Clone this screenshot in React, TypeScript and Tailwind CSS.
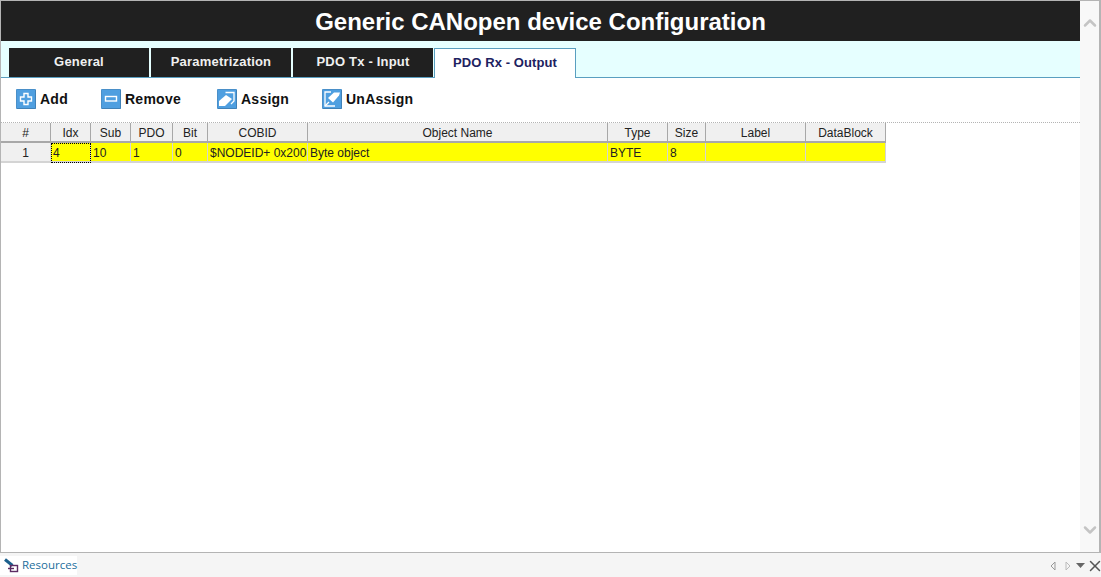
import React from 'react';
import { ChevronUp, ChevronDown, X } from 'lucide-react';

const tabs = ['General', 'Parametrization', 'PDO Tx - Input'];

function IconBox({ children }: { children: React.ReactNode }) {
  return (
    <svg width="20" height="20" viewBox="0 0 20 20" className="shrink-0">
      <rect x="0" y="0" width="20" height="20" rx="1" fill="#4f9fe0" />
      <rect x="0.5" y="0.5" width="19" height="19" rx="1" fill="none" stroke="#4a8fc8" />
      <path d="M1 19.500h18.500V1" fill="none" stroke="#3b78ab" strokeOpacity="0.6" />
      {children}
    </svg>
  );
}

const PlusIcon = () => (
  <IconBox>
    <path d="M8 4.500h4V8h3.500v4H12v3.500H8V12H4.500V8H8z" fill="none" stroke="#fff" strokeWidth="1.400" />
  </IconBox>
);

const MinusIcon = () => (
  <IconBox>
    <rect x="4.500" y="7.500" width="11" height="4.500" fill="none" stroke="#fff" strokeWidth="1.400" />
  </IconBox>
);

const AssignIcon = () => (
  <IconBox>
    <path d="M2 12l7-6 6 4-7 7H2z" fill="#fff" />
    <path d="M8.500 3.500h8.500V12l-3 3" fill="none" stroke="#fff" strokeWidth="1.300" />
  </IconBox>
);

const UnAssignIcon = () => (
  <IconBox>
    <path d="M6 9l6-5.500h6l-1 3-6 7z" fill="#fff" />
    <path d="M9 3H3v14h10" fill="none" stroke="#fff" strokeWidth="1.300" />
    <path d="M3 17l4-4" stroke="#fff" strokeWidth="1.300" />
  </IconBox>
);

function ToolButton({ icon, label, className }: { icon: React.ReactNode; label: string; className: string }) {
  return (
    <div className={`flex items-center gap-1 ${className}`}>
      {icon}
      <span className="text-[14px] font-bold text-[#111] tracking-[0.25px]">{label}</span>
    </div>
  );
}

const columns = [
  { title: '#', w: 'w-[50px]', value: '1', center: true },
  { title: 'Idx', w: 'w-[40px]', value: '4', focus: true },
  { title: 'Sub', w: 'w-[40px]', value: '10' },
  { title: 'PDO', w: 'w-[42px]', value: '1' },
  { title: 'Bit', w: 'w-[35px]', value: '0' },
  { title: 'COBID', w: 'w-[100px]', value: '$NODEID+ 0x200' },
  { title: 'Object Name', w: 'w-[300px]', value: 'Byte object' },
  { title: 'Type', w: 'w-[60px]', value: 'BYTE' },
  { title: 'Size', w: 'w-[38px]', value: '8' },
  { title: 'Label', w: 'w-[100px]', value: '' },
  { title: 'DataBlock', w: 'w-[80px]', value: '' },
];

export default function App() {
  return (
    <div className="w-[1101px] h-[577px] flex flex-col bg-[#f5f5f5] overflow-hidden font-['Liberation_Sans',Arial,sans-serif]">
      <div className="h-[553px] flex border-t border-l border-r-2 border-b border-[#b4b4b4] bg-white">
        <div className="w-[1079px] flex flex-col">
          <div className="h-[40px] shrink-0 bg-[#202020] flex items-center justify-center pt-[2px] text-white text-[24px] font-bold">
            Generic CANopen device Configuration
          </div>

          <div className="h-[37px] shrink-0 bg-[#e6ffff] border-b border-[#5a9fc0] flex items-end pl-2">
            {tabs.map(t => (
              <div key={t} className="w-[140px] h-[29px] mr-[2px] pb-[2px] bg-[#202020] text-[#f0f0f0] text-[13px] font-bold flex items-center justify-center tracking-[0.2px]">
                {t}
              </div>
            ))}
            <div className="w-[142px] h-[30px] -mb-px -ml-[1px] pb-[1px] bg-white border border-b-0 border-[#5a9fc0] text-[#1d2260] text-[13px] font-bold flex items-center justify-center tracking-[0.1px]">
              PDO Rx - Output
            </div>
          </div>

          <div className="h-[45px] shrink-0 flex items-center pl-[15px] pb-[2px] border-b border-dotted border-[#b4b4b4]">
            <ToolButton icon={<PlusIcon />} label="Add" className="w-[85px]" />
            <ToolButton icon={<MinusIcon />} label="Remove" className="w-[116px]" />
            <ToolButton icon={<AssignIcon />} label="Assign" className="w-[105px]" />
            <ToolButton icon={<UnAssignIcon />} label="UnAssign" className="w-[100px]" />
          </div>

          <div className="flex h-[20px] text-[12px] text-[#222]">
            {columns.map(c => (
              <div key={c.title} className={`${c.w} shrink-0 pt-[1px] bg-[#f0f0f0] border-r border-b-2 border-[#a8a8a8] flex items-center justify-center`}>
                {c.title}
              </div>
            ))}
          </div>
          <div className="flex h-[20px] text-[12px] text-[#222]">
            {columns.map(c => (
              <div
                key={c.title}
                className={`${c.w} shrink-0 pt-[1px] border-r border-b-2 border-[#d4d4d4] flex items-center whitespace-nowrap overflow-hidden ${
                  c.center ? 'bg-[#f0f0f0] justify-center' : 'bg-[#ffff00] pl-[2px]'
                } ${c.focus ? 'outline-1 -outline-offset-1 outline-dotted outline-black' : ''}`}
              >
                {c.value}
              </div>
            ))}
          </div>
        </div>

        <div className="w-[19px] bg-[#f8f8f8] flex flex-col justify-between items-center py-[12px]">
          <ChevronUp size={20} strokeWidth={3} className="text-[#c4c4c4]" />
          <ChevronDown size={20} strokeWidth={3} className="text-[#c4c4c4]" />
        </div>
      </div>

      <div className="flex-1 flex items-center justify-between">
        <div className="h-[19px] w-[77px] bg-white flex items-center pl-[4px] gap-[3px]">
          <svg width="15" height="15" viewBox="0 0 15 15" className="shrink-0">
            <path d="M1 1.500l7.500 6" stroke="#1b5f8c" strokeWidth="3" />
            <rect x="6.500" y="7.500" width="7" height="6" fill="none" stroke="#5c2b63" strokeWidth="1.400" />
            <path d="M4 10.500h6" stroke="#5c2b63" strokeWidth="1.400" />
          </svg>
          <span className="text-[11.5px] text-[#1c6e9c] font-['Open_Sans',sans-serif]">Resources</span>
        </div>
        <div className="flex items-center mt-[1px] -mr-[3px]">
          <svg width="8" height="10" viewBox="0 0 8 10" className="mr-[7px]"><path d="M6 1L2 5l4 4z" fill="none" stroke="#999" /></svg>
          <svg width="8" height="10" viewBox="0 0 8 10" className="mr-[4px]"><path d="M2 1l4 4-4 4z" fill="none" stroke="#bbb" /></svg>
          <svg width="9" height="6" viewBox="0 0 9 6" className="mr-[1px]"><path d="M0 0h9L4.500 5z" fill="#666" /></svg>
          <X size={18} strokeWidth={2} className="text-[#555]" />
        </div>
      </div>
    </div>
  );
}
